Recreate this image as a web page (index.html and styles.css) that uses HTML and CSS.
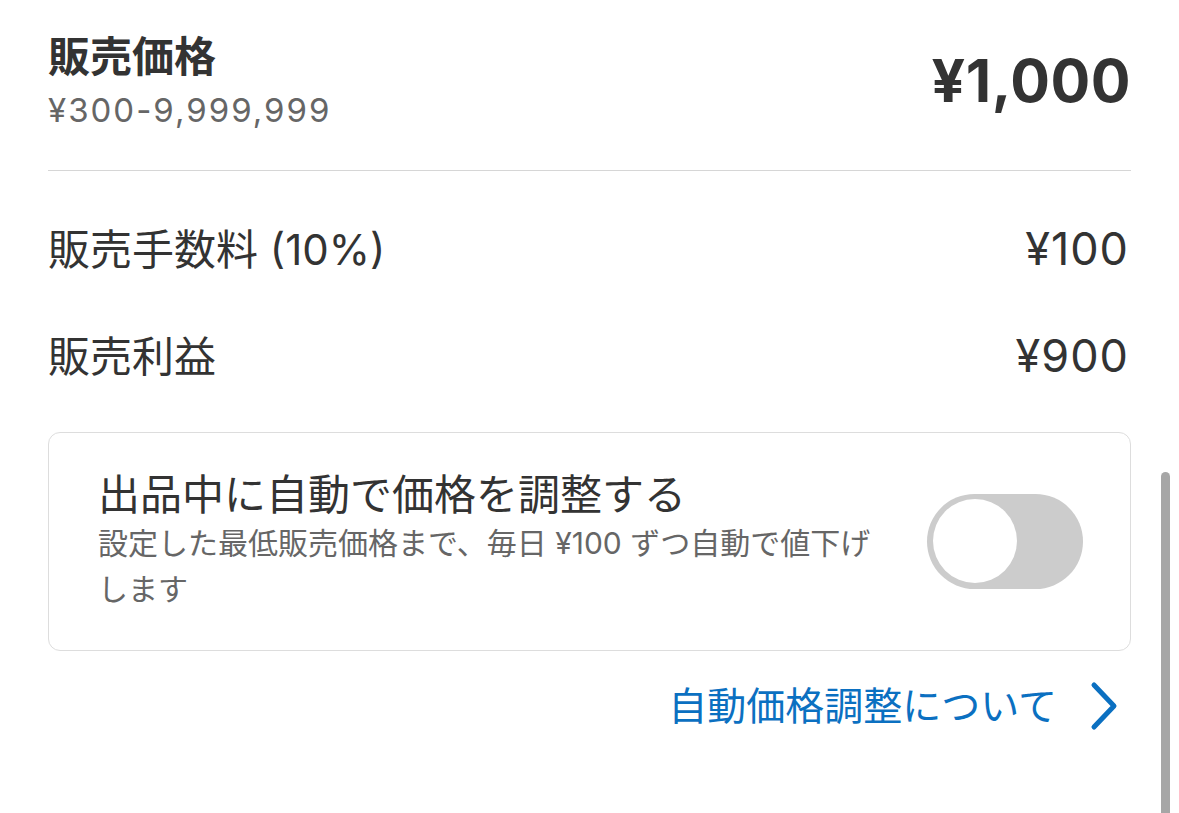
FILE: index.html
```html
<!DOCTYPE html>
<html lang="ja">
<head>
<meta charset="utf-8">
<title>販売価格</title>
<link rel="stylesheet" href="styles.css">
</head>
<body>
<main class="page">
  <section class="price-head">
    <div class="price-head__left">
      <h1 class="price-head__title">販売価格</h1>
      <div class="price-head__range">¥300-9,999,999</div>
    </div>
    <div class="price-head__value">¥1,000</div>
  </section>
  <hr class="divider">
  <section class="rows">
    <div class="row">
      <span class="row__label">販売手数料 (10%)</span>
      <span class="row__value">¥100</span>
    </div>
    <div class="row">
      <span class="row__label">販売利益</span>
      <span class="row__value">¥900</span>
    </div>
  </section>
  <section class="card">
    <div class="card__text">
      <div class="card__title">出品中に自動で価格を調整する</div>
      <div class="card__desc">設定した最低販売価格まで、毎日 ¥100 ずつ自動で値下げします</div>
    </div>
    <div class="toggle" role="switch" aria-checked="false">
      <div class="toggle__knob"></div>
    </div>
  </section>
  <div class="link-row">
    <a class="link" href="#">自動価格調整について</a>
    <svg class="chevron" width="30" height="50" viewBox="0 0 30 50" aria-hidden="true">
      <path d="M5 4 L25 25 L5 46" fill="none" stroke="#0b70c1" stroke-width="5" stroke-linecap="round" stroke-linejoin="round"/>
    </svg>
  </div>
</main>
<div class="scrollbar"></div>
</body>
</html>
```
FILE: styles.css
```css
html, body {
  margin: 0;
  padding: 0;
  background: #ffffff;
}
body {
  font-family: "Inter", "Noto Sans CJK JP", sans-serif;
  color: #333333;
  overflow: hidden;
}
.page {
  padding: 32px 48px 0 48px;
  width: 1083px;
}
.price-head {
  display: flex;
  justify-content: space-between;
  align-items: center;
}
.price-head__title {
  margin: 0;
  font-size: 42px;
  line-height: 50px;
  font-weight: 700;
  color: #333333;
}
.price-head__range {
  margin-top: 8px;
  font-size: 33px;
  line-height: 40px;
  color: #666666;
  letter-spacing: 2px;
}
.price-head__value {
  font-size: 59px;
  line-height: 64px;
  font-weight: 700;
  color: #333333;
  letter-spacing: 0.5px;
}
.divider {
  margin: 40px 0 0 0;
  border: 0;
  height: 1px;
  background: #d6d6d6;
}
.rows {
  margin-top: 25px;
}
.row {
  display: flex;
  justify-content: space-between;
  align-items: baseline;
  padding: 28px 2px 28px 0;
  font-size: 42px;
  line-height: 50px;
  color: #333333;
}
.row__value {
  font-size: 45px;
  letter-spacing: 1px;
}
.card {
  margin-top: 22px;
  border: 1px solid #dddddd;
  border-radius: 12px;
  padding: 37px 47px 38px 49px;
  display: flex;
  align-items: center;
  gap: 30px;
}
.card__text {
  flex: 1;
}
.card__title {
  font-size: 42px;
  line-height: 50px;
  color: #333333;
}
.card__desc {
  font-size: 30px;
  line-height: 46px;
  color: #666666;
}
.toggle {
  flex: none;
  width: 156px;
  height: 95px;
  border-radius: 48px;
  background: #cccccc;
  display: flex;
  align-items: center;
  padding: 0 6px;
  box-sizing: border-box;
}
.toggle__knob {
  width: 84px;
  height: 84px;
  border-radius: 50%;
  background: #ffffff;
}
.link-row {
  margin-top: 30px;
  display: flex;
  justify-content: flex-end;
  align-items: center;
  gap: 32px;
  padding-right: 12px;
}
.link {
  font-size: 39px;
  line-height: 46px;
  color: #0b70c1;
  text-decoration: none;
}
.chevron {
  display: block;
}
.scrollbar {
  position: fixed;
  left: 1161px;
  top: 472px;
  width: 9px;
  height: 400px;
  border-radius: 5px;
  background: #a6a6a6;
}
```
